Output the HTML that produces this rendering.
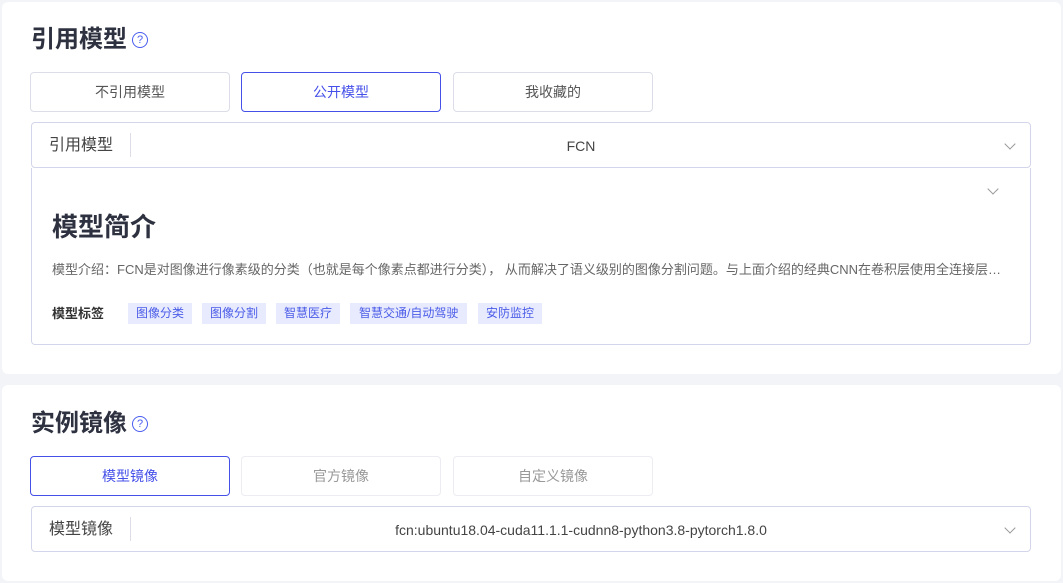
<!DOCTYPE html>
<html><head><meta charset="utf-8"><style>
*{box-sizing:border-box;margin:0;padding:0}
body{width:1063px;height:583px;background:#f3f4f8;font-family:"Liberation Sans","Noto Sans CJK SC",sans-serif;position:relative;overflow:hidden;color:#333}
.card{position:absolute;left:2px;width:1059px;background:#fff;border-radius:6px}
.abs{position:absolute}
h2{position:absolute;font-size:24px;font-weight:700;color:#2e3240;line-height:30px}
.q{position:absolute;width:16px;height:16px;border:1.3px solid #4a5df0;border-radius:50%;color:#4a5df0;font-size:11px;text-align:center;line-height:14px}
.btn{position:absolute;width:200px;height:40px;border:1px solid #dcdde8;border-radius:4px;font-size:14px;color:#555;text-align:center;line-height:38px}
.btn.on{border-color:#4550e8;color:#4550e8}
.btn.dis{border-color:#ececf2;color:#999}
.sel{position:absolute;left:31px;width:1000px;height:46px;border:1px solid #d3d6ea;border-radius:4px}
.sel .l{position:absolute;left:17px;top:1px;line-height:44px;font-size:16px;color:#444}
.sel .d{position:absolute;left:98px;top:10px;width:1px;height:24px;background:#dcdde6}
.sel .v{position:absolute;left:100px;right:0;top:1px;text-align:center;line-height:44px;font-size:14px;color:#444}
.chev{position:absolute;width:8px;height:8px;border-right:1px solid #999;border-bottom:1px solid #999;transform:rotate(45deg)}
.tag{position:absolute;top:303px;height:21px;background:#e8ebfd;color:#4b5ce8;font-size:12px;line-height:21px;padding:0 8px}
</style></head><body>
<div class="card" style="top:2px;height:372px"></div>
<div class="card" style="top:385px;height:196px"></div>

<h2 style="left:31px;top:25px">引用模型</h2>
<div class="q" style="left:132px;top:32px">?</div>
<div class="btn" style="left:30px;top:72px">不引用模型</div>
<div class="btn on" style="left:241px;top:72px">公开模型</div>
<div class="btn" style="left:453px;top:72px">我收藏的</div>
<div class="sel" style="top:122px"><span class="l">引用模型</span><span class="d"></span><span class="v">FCN</span><span class="chev" style="right:16px;top:17px"></span></div>
<div class="abs" style="left:31px;top:168px;width:1000px;height:177px;border:1px solid #d3d6ea;border-top:none;border-radius:0 0 4px 4px"></div>
<span class="chev" style="left:989px;top:185px"></span>
<div class="abs" style="left:52px;top:210px;font-size:26px;font-weight:700;color:#2e3240;line-height:34px">模型简介</div>
<div class="abs" style="left:52px;top:260px;width:960px;white-space:nowrap;overflow:hidden;text-overflow:ellipsis;font-size:13px;color:#666;line-height:20px">模型介绍：FCN是对图像进行像素级的分类（也就是每个像素点都进行分类）， 从而解决了语义级别的图像分割问题。与上面介绍的经典CNN在卷积层使用全连接层得到固定长度的特征向量进行分类不同</div>
<div class="abs" style="left:52px;top:303px;font-size:13px;font-weight:700;color:#333;line-height:21px">模型标签</div>
<span class="tag" style="left:128px">图像分类</span>
<span class="tag" style="left:202px">图像分割</span>
<span class="tag" style="left:276px">智慧医疗</span>
<span class="tag" style="left:350px;padding:0 9px">智慧交通/自动驾驶</span>
<span class="tag" style="left:478px">安防监控</span>

<h2 style="left:31px;top:409px">实例镜像</h2>
<div class="q" style="left:132px;top:416px">?</div>
<div class="btn on" style="left:30px;top:456px">模型镜像</div>
<div class="btn dis" style="left:241px;top:456px">官方镜像</div>
<div class="btn dis" style="left:453px;top:456px">自定义镜像</div>
<div class="sel" style="top:506px"><span class="l">模型镜像</span><span class="d"></span><span class="v">fcn:ubuntu18.04-cuda11.1.1-cudnn8-python3.8-pytorch1.8.0</span><span class="chev" style="right:16px;top:17px"></span></div>
</body></html>
